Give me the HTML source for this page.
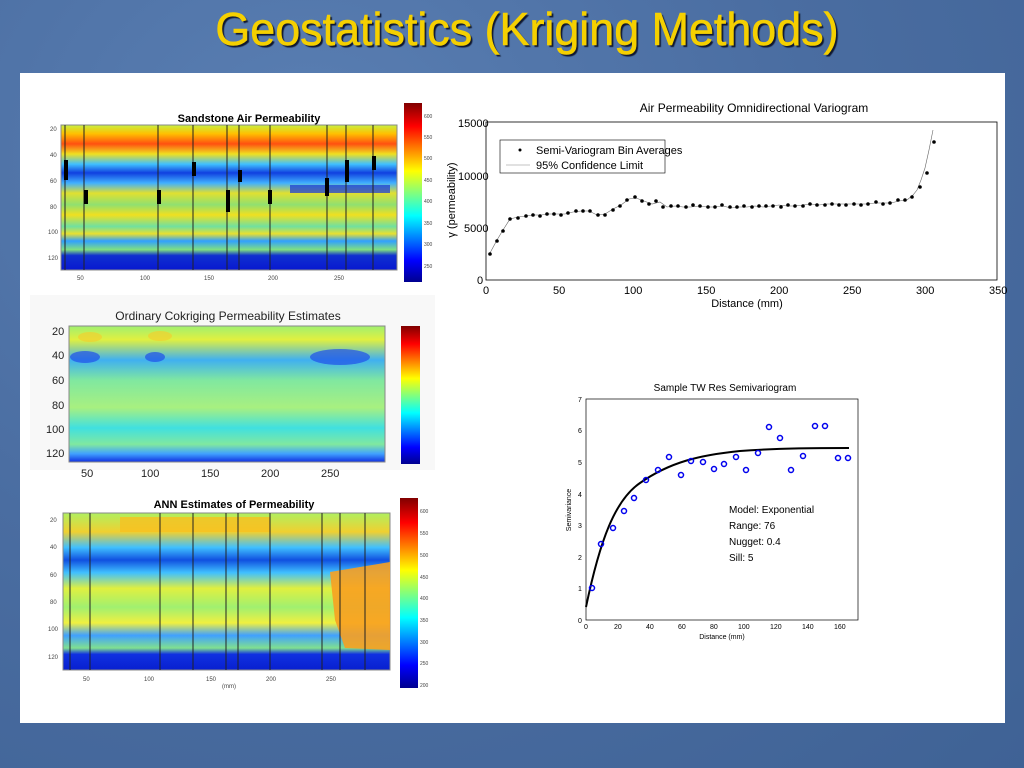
<!DOCTYPE html>
<html><head><meta charset="utf-8"><style>
body{margin:0;width:1024px;height:768px;overflow:hidden;background:#4b6fa3;font-family:"Liberation Sans",sans-serif}
.bg{position:absolute;inset:0;background:radial-gradient(ellipse at 30% 20%,#5a7fb3 0%,#4a6da1 50%,#3f6295 100%)}
h1{position:absolute;left:0;width:1024px;top:2px;margin:0;text-align:center;font-weight:normal;font-size:46px;color:#f5d000;text-shadow:2px 2px 1px #101830;font-family:"Liberation Sans Narrow","Liberation Sans",sans-serif;-webkit-text-stroke:.6px #f5d000;transform:translateX(15px) scaleX(.975)}
.panel{position:absolute;left:20px;top:73px;width:985px;height:650px;background:#fff}
svg{position:absolute;left:0;top:0}
</style></head><body><div class="bg"></div>
<h1>Geostatistics (Kriging Methods)</h1>
<div class="panel"></div>
<svg width="1024" height="768" font-family="Liberation Sans, sans-serif">
<defs>
<linearGradient id="jet" x1="0" y1="1" x2="0" y2="0">
<stop offset="0" stop-color="#00008f"/><stop offset=".12" stop-color="#0000ff"/><stop offset=".37" stop-color="#00ffff"/><stop offset=".62" stop-color="#ffff00"/><stop offset=".87" stop-color="#ff0000"/><stop offset="1" stop-color="#800000"/>
</linearGradient>
<linearGradient id="h1" x1="0" y1="0" x2="0" y2="1">
<stop offset="0" stop-color="#c8f040"/><stop offset=".06" stop-color="#ffc000"/><stop offset=".13" stop-color="#ff5010"/><stop offset=".2" stop-color="#f0e020"/><stop offset=".27" stop-color="#40c0ff"/><stop offset=".33" stop-color="#1040e0"/><stop offset=".4" stop-color="#40b0ff"/><stop offset=".47" stop-color="#e0e030"/><stop offset=".55" stop-color="#90e070"/><stop offset=".62" stop-color="#f0e020"/><stop offset=".7" stop-color="#70e0a0"/><stop offset=".75" stop-color="#e8e030"/><stop offset=".8" stop-color="#30a0ff"/><stop offset=".86" stop-color="#80e080"/><stop offset=".9" stop-color="#1030d0"/><stop offset="1" stop-color="#0818d0"/>
</linearGradient>
<linearGradient id="h2" x1="0" y1="0" x2="0" y2="1">
<stop offset="0" stop-color="#a0f070"/><stop offset=".1" stop-color="#e0f040"/><stop offset=".25" stop-color="#40b0f0"/><stop offset=".4" stop-color="#80e8a0"/><stop offset=".6" stop-color="#a8f080"/><stop offset=".75" stop-color="#40e0e0"/><stop offset=".87" stop-color="#80e8a0"/><stop offset=".94" stop-color="#40a0ff"/><stop offset="1" stop-color="#1030e0"/>
</linearGradient>
<linearGradient id="h3" x1="0" y1="0" x2="0" y2="1">
<stop offset="0" stop-color="#b0f060"/><stop offset=".12" stop-color="#f0d030"/><stop offset=".22" stop-color="#40c0ff"/><stop offset=".3" stop-color="#1050e0"/><stop offset=".38" stop-color="#40c0ff"/><stop offset=".48" stop-color="#e0f040"/><stop offset=".6" stop-color="#a0f070"/><stop offset=".7" stop-color="#f0f040"/><stop offset=".78" stop-color="#40a0ff"/><stop offset=".86" stop-color="#80e090"/><stop offset=".9" stop-color="#1030e0"/><stop offset="1" stop-color="#0820d0"/>
</linearGradient>
</defs>
<!-- plot1 -->
<text x="249" y="122" font-size="11" font-weight="bold" text-anchor="middle">Sandstone Air Permeability</text>
<rect x="61" y="125" width="336" height="145" fill="url(#h1)" stroke="#888"/>
<rect x="290" y="185" width="100" height="8" fill="#1838d8" opacity=".7"/>
<g stroke="#222" stroke-width="1">
<line x1="65" y1="125" x2="65" y2="270"/><line x1="84" y1="125" x2="84" y2="270"/><line x1="158" y1="125" x2="158" y2="270"/><line x1="193" y1="125" x2="193" y2="270"/><line x1="227" y1="125" x2="227" y2="270"/><line x1="239" y1="125" x2="239" y2="270"/><line x1="270" y1="125" x2="270" y2="270"/><line x1="327" y1="125" x2="327" y2="270"/><line x1="346" y1="125" x2="346" y2="270"/><line x1="373" y1="125" x2="373" y2="270"/>
</g>
<g fill="#000"><rect x="64" y="160" width="4" height="20"/><rect x="84" y="190" width="4" height="14"/><rect x="157" y="190" width="4" height="14"/><rect x="192" y="162" width="4" height="14"/><rect x="226" y="190" width="4" height="22"/><rect x="238" y="170" width="4" height="12"/><rect x="268" y="190" width="4" height="14"/><rect x="325" y="178" width="4" height="18"/><rect x="345" y="160" width="4" height="22"/><rect x="372" y="156" width="4" height="14"/></g>
<g font-size="6" fill="#444"><text x="50" y="131">20</text><text x="50" y="157">40</text><text x="50" y="183">60</text><text x="50" y="209">80</text><text x="48" y="234">100</text><text x="48" y="260">120</text><text x="77" y="280">50</text><text x="140" y="280">100</text><text x="204" y="280">150</text><text x="268" y="280">200</text><text x="334" y="280">250</text></g>
<rect x="404" y="103" width="18" height="179" fill="url(#jet)"/>
<g font-size="5" fill="#444"><text x="424" y="118">600</text><text x="424" y="139">550</text><text x="424" y="160">500</text><text x="424" y="182">450</text><text x="424" y="203">400</text><text x="424" y="225">350</text><text x="424" y="246">300</text><text x="424" y="268">250</text></g>
<!-- plot2 -->
<rect x="30" y="295" width="405" height="175" fill="#f8f8f8"/>
<text x="228" y="320" font-size="12" text-anchor="middle" fill="#222">Ordinary Cokriging Permeability Estimates</text>
<rect x="69" y="326" width="316" height="136" fill="url(#h2)" stroke="#888"/>
<g fill="#2050e8" opacity=".7"><ellipse cx="340" cy="357" rx="30" ry="8"/><ellipse cx="85" cy="357" rx="15" ry="6"/><ellipse cx="155" cy="357" rx="10" ry="5"/></g>
<g fill="#f0d030" opacity=".7"><ellipse cx="90" cy="337" rx="12" ry="5"/><ellipse cx="160" cy="336" rx="12" ry="5"/></g>
<g font-size="11" fill="#222"><text x="52" y="335">20</text><text x="52" y="359">40</text><text x="52" y="384">60</text><text x="52" y="409">80</text><text x="46" y="433">100</text><text x="46" y="457">120</text><text x="81" y="477">50</text><text x="141" y="477">100</text><text x="201" y="477">150</text><text x="261" y="477">200</text><text x="321" y="477">250</text></g>
<rect x="401" y="326" width="19" height="138" fill="url(#jet)"/>
<!-- plot3 -->
<text x="234" y="508" font-size="11" font-weight="bold" text-anchor="middle">ANN Estimates of Permeability</text>
<rect x="63" y="513" width="327" height="157" fill="url(#h3)" stroke="#888"/>
<path d="M330 572 L390 562 L390 650 L345 648 L335 620 Z" fill="#f8a020" opacity=".9"/>
<rect x="120" y="517" width="150" height="15" fill="#f8c020" opacity=".8"/>
<g stroke="#222" stroke-width="1">
<line x1="70" y1="513" x2="70" y2="670"/><line x1="90" y1="513" x2="90" y2="670"/><line x1="160" y1="513" x2="160" y2="670"/><line x1="193" y1="513" x2="193" y2="670"/><line x1="226" y1="513" x2="226" y2="670"/><line x1="238" y1="513" x2="238" y2="670"/><line x1="270" y1="513" x2="270" y2="670"/><line x1="322" y1="513" x2="322" y2="670"/><line x1="340" y1="513" x2="340" y2="670"/><line x1="365" y1="513" x2="365" y2="670"/>
</g>
<g font-size="6" fill="#444"><text x="50" y="522">20</text><text x="50" y="549">40</text><text x="50" y="577">60</text><text x="50" y="604">80</text><text x="48" y="631">100</text><text x="48" y="659">120</text><text x="83" y="681">50</text><text x="144" y="681">100</text><text x="206" y="681">150</text><text x="266" y="681">200</text><text x="326" y="681">250</text><text x="222" y="688">(mm)</text></g>
<rect x="400" y="498" width="18" height="190" fill="url(#jet)"/>
<g font-size="5" fill="#444"><text x="420" y="513">600</text><text x="420" y="535">550</text><text x="420" y="557">500</text><text x="420" y="579">450</text><text x="420" y="600">400</text><text x="420" y="622">350</text><text x="420" y="644">300</text><text x="420" y="665">250</text><text x="420" y="687">200</text></g>
<!-- variogram 1 -->
<text x="754" y="112" font-size="12" text-anchor="middle">Air Permeability Omnidirectional Variogram</text>
<rect x="486" y="122" width="511" height="158" fill="#fff" stroke="#000" stroke-width=".8"/>
<g font-size="11"><text x="458" y="127">15000</text><text x="458" y="180">10000</text><text x="464" y="232">5000</text><text x="477" y="284">0</text>
<text x="483" y="294">0</text><text x="553" y="294">50</text><text x="624" y="294">100</text><text x="697" y="294">150</text><text x="770" y="294">200</text><text x="843" y="294">250</text><text x="916" y="294">300</text><text x="989" y="294">350</text>
<text x="747" y="307" text-anchor="middle">Distance (mm)</text>
<text transform="translate(455,200) rotate(-90)" text-anchor="middle">γ (permeability)</text></g>
<rect x="500" y="140" width="165" height="33" fill="#fff" stroke="#000" stroke-width=".6"/>
<circle cx="520" cy="150" r="1.5"/><text x="536" y="154" font-size="11">Semi-Variogram Bin Averages</text>
<line x1="506" y1="165" x2="530" y2="165" stroke="#888" stroke-width=".6"/><text x="536" y="169" font-size="11">95% Confidence Limit</text>
<polyline fill="none" stroke="#666" stroke-width=".6" points="490,253 497,240 503,230 510,219 518,217 526,216 534,215 541,215 549,214 557,214 565,214 573,212 581,211 589,211 597,215 605,214 613,209 621,205 629,199 636,198 644,201 652,204 660,202 667,207 675,206 683,207 691,207 699,206 707,207 715,207 723,206 731,208 739,207 747,207 755,206 763,207 771,206 779,205 787,206 795,206 803,205 811,204 819,205 827,204 835,204 843,204 851,204 859,204 867,204 875,203 883,203 891,203 899,201 907,200 913,195 917,190 921,180 925,168 929,150 933,130"/>
<g fill="#000">
<circle cx="490" cy="254" r="1.8"/><circle cx="497" cy="241" r="1.8"/><circle cx="503" cy="231" r="1.8"/><circle cx="510" cy="219" r="1.8"/><circle cx="518" cy="218" r="1.8"/><circle cx="526" cy="216" r="1.8"/><circle cx="533" cy="215" r="1.8"/><circle cx="540" cy="216" r="1.8"/><circle cx="547" cy="214" r="1.8"/><circle cx="554" cy="214" r="1.8"/><circle cx="561" cy="215" r="1.8"/><circle cx="568" cy="213" r="1.8"/><circle cx="576" cy="211" r="1.8"/><circle cx="583" cy="211" r="1.8"/><circle cx="590" cy="211" r="1.8"/><circle cx="598" cy="215" r="1.8"/><circle cx="605" cy="215" r="1.8"/><circle cx="613" cy="210" r="1.8"/><circle cx="620" cy="206" r="1.8"/><circle cx="627" cy="200" r="1.8"/><circle cx="635" cy="197" r="1.8"/><circle cx="642" cy="201" r="1.8"/><circle cx="649" cy="204" r="1.8"/><circle cx="656" cy="201" r="1.8"/><circle cx="663" cy="207" r="1.8"/><circle cx="671" cy="206" r="1.8"/><circle cx="678" cy="206" r="1.8"/><circle cx="686" cy="207" r="1.8"/><circle cx="693" cy="205" r="1.8"/><circle cx="700" cy="206" r="1.8"/><circle cx="708" cy="207" r="1.8"/><circle cx="715" cy="207" r="1.8"/><circle cx="722" cy="205" r="1.8"/><circle cx="730" cy="207" r="1.8"/><circle cx="737" cy="207" r="1.8"/><circle cx="744" cy="206" r="1.8"/><circle cx="752" cy="207" r="1.8"/><circle cx="759" cy="206" r="1.8"/><circle cx="766" cy="206" r="1.8"/><circle cx="773" cy="206" r="1.8"/><circle cx="781" cy="207" r="1.8"/><circle cx="788" cy="205" r="1.8"/><circle cx="795" cy="206" r="1.8"/><circle cx="803" cy="206" r="1.8"/><circle cx="810" cy="204" r="1.8"/><circle cx="817" cy="205" r="1.8"/><circle cx="825" cy="205" r="1.8"/><circle cx="832" cy="204" r="1.8"/><circle cx="839" cy="205" r="1.8"/><circle cx="846" cy="205" r="1.8"/><circle cx="854" cy="204" r="1.8"/><circle cx="861" cy="205" r="1.8"/><circle cx="868" cy="204" r="1.8"/><circle cx="876" cy="202" r="1.8"/><circle cx="883" cy="204" r="1.8"/><circle cx="890" cy="203" r="1.8"/><circle cx="898" cy="200" r="1.8"/><circle cx="905" cy="200" r="1.8"/><circle cx="912" cy="197" r="1.8"/><circle cx="920" cy="187" r="1.8"/><circle cx="927" cy="173" r="1.8"/><circle cx="934" cy="142" r="1.8"/>
</g>
<!-- variogram 2 -->
<text x="725" y="391" font-size="10" text-anchor="middle">Sample TW Res Semivariogram</text>
<rect x="586" y="399" width="272" height="221" fill="#fff" stroke="#000" stroke-width=".7"/>
<g font-size="7"><text x="578" y="402">7</text><text x="578" y="433">6</text><text x="578" y="465">5</text><text x="578" y="497">4</text><text x="578" y="528">3</text><text x="578" y="560">2</text><text x="578" y="591">1</text><text x="578" y="623">0</text>
<text x="584" y="629">0</text><text x="614" y="629">20</text><text x="646" y="629">40</text><text x="678" y="629">60</text><text x="710" y="629">80</text><text x="738" y="629">100</text><text x="770" y="629">120</text><text x="802" y="629">140</text><text x="834" y="629">160</text>
<text x="722" y="639" text-anchor="middle">Distance (mm)</text>
<text transform="translate(571,510) rotate(-90)" text-anchor="middle">Semivariance</text></g>
<path d="M586,607 C600,540 615,500 640,483 C670,462 700,455 740,451 C780,448 820,448 849,448" fill="none" stroke="#000" stroke-width="2"/>
<g fill="none" stroke="#0000ee" stroke-width="1.5">
<circle cx="592" cy="588" r="2.5"/><circle cx="601" cy="544" r="2.5"/><circle cx="613" cy="528" r="2.5"/><circle cx="624" cy="511" r="2.5"/><circle cx="634" cy="498" r="2.5"/><circle cx="646" cy="480" r="2.5"/><circle cx="658" cy="470" r="2.5"/><circle cx="669" cy="457" r="2.5"/><circle cx="681" cy="475" r="2.5"/><circle cx="691" cy="461" r="2.5"/><circle cx="703" cy="462" r="2.5"/><circle cx="714" cy="469" r="2.5"/><circle cx="724" cy="464" r="2.5"/><circle cx="736" cy="457" r="2.5"/><circle cx="746" cy="470" r="2.5"/><circle cx="758" cy="453" r="2.5"/><circle cx="769" cy="427" r="2.5"/><circle cx="780" cy="438" r="2.5"/><circle cx="791" cy="470" r="2.5"/><circle cx="803" cy="456" r="2.5"/><circle cx="815" cy="426" r="2.5"/><circle cx="825" cy="426" r="2.5"/><circle cx="838" cy="458" r="2.5"/><circle cx="848" cy="458" r="2.5"/>
</g>
<g font-size="10"><text x="729" y="513">Model: Exponential</text><text x="729" y="529">Range: 76</text><text x="729" y="545">Nugget: 0.4</text><text x="729" y="561">Sill: 5</text></g>
</svg>
</body></html>
